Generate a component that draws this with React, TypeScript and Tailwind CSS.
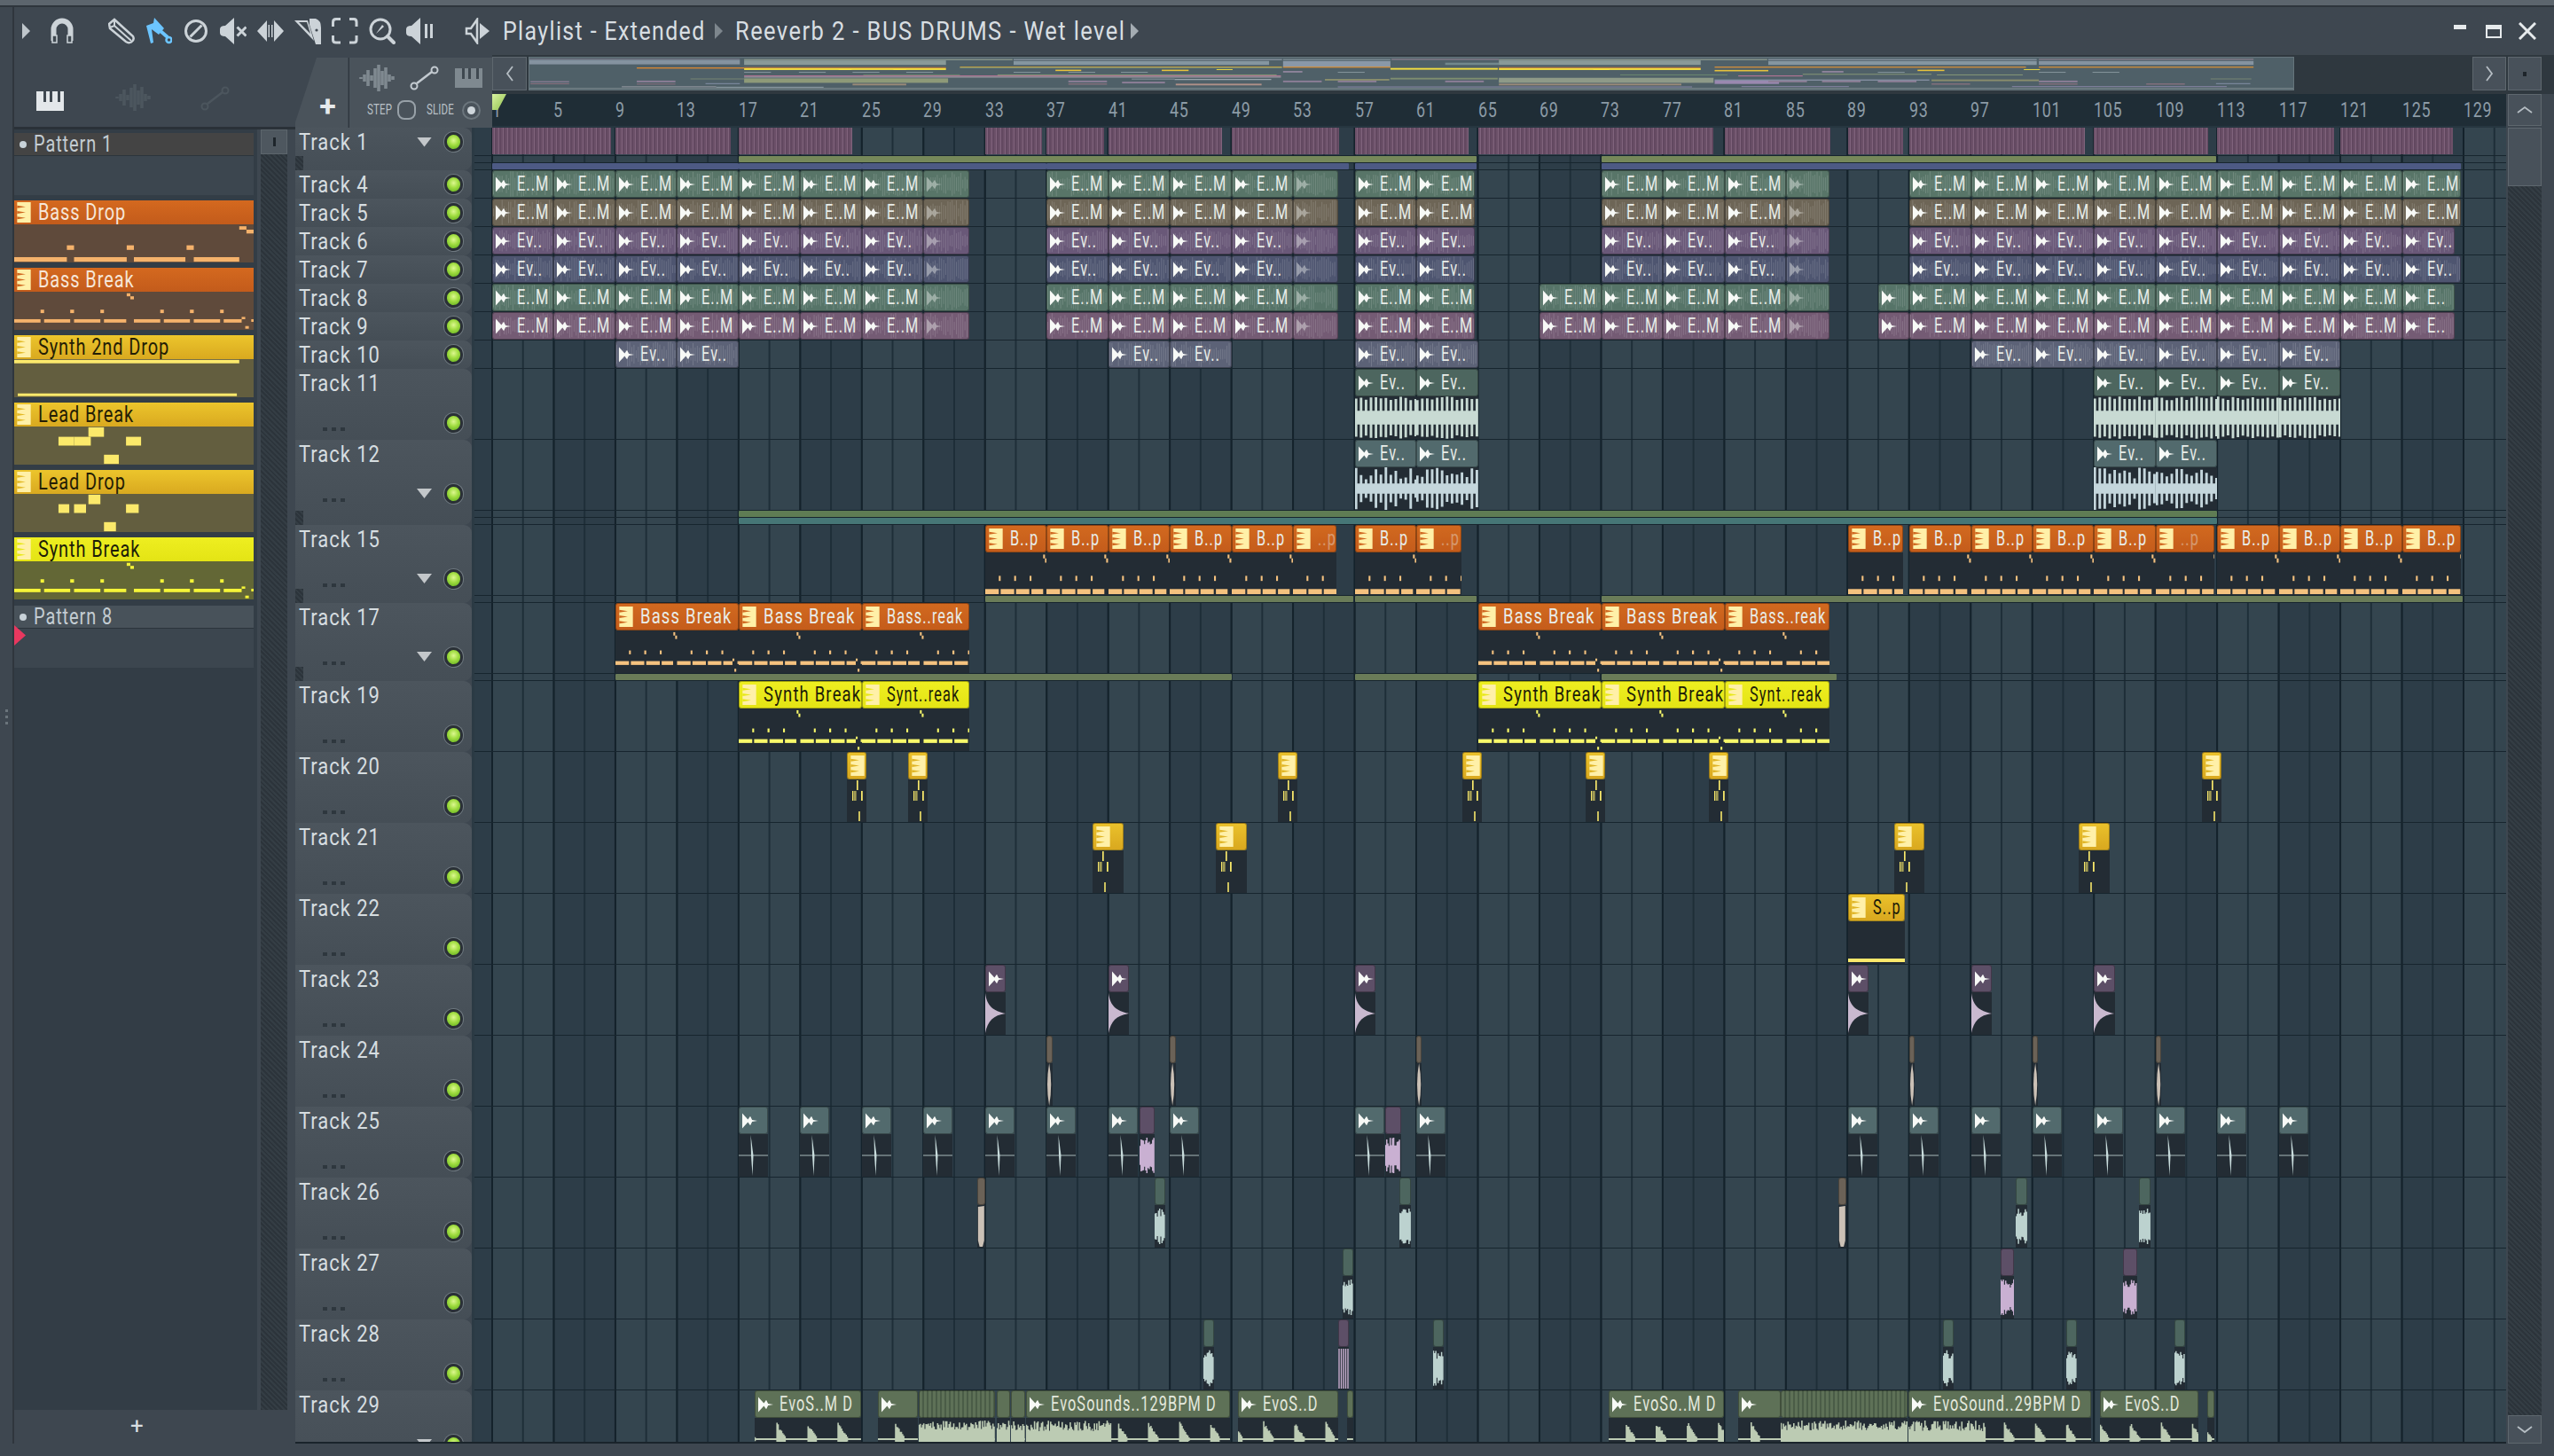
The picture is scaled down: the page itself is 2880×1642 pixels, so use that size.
import React from "react";

const BAR = 17.37;
const barLeft = (bar: number) => (bar - 1) * BAR + 20;
const fromX = (x: number) => (x - 555) / BAR + 1;

// grid behind every lane, bar 1 sits 20px into the lane
const GRID =
  "bg-[linear-gradient(90deg,#14222b_2px,transparent_2px),linear-gradient(90deg,#1e2e38_2px,transparent_2px),linear-gradient(90deg,#34454f_50%,#2d3d48_50%)] bg-[size:69.48px_100%,34.74px_100%,138.96px_100%] bg-[position:19px_0,19px_0,20px_0]";
const HATCH = "bg-[repeating-linear-gradient(45deg,#2c343b_0_2px,#343d44_2px_4px)]";
const STRIPES = "bg-[repeating-linear-gradient(90deg,#6b5068_0_2px,#80637c_2px_3px,#624860_3px_5px)]";
const EVO_STRIPES = "bg-[repeating-linear-gradient(90deg,#5e7157_0_3px,#4a5c47_3px_5px)] border border-[#6b7f63]";

type Note = [number, number, number, number];

const BASS_DROP: Note[] = [
  [0, 22, 86, 98], [25, 47, 86, 98], [50, 71.5, 86, 98], [75, 94, 86, 98],
  [22, 25, 55, 67], [47, 50, 55, 67], [72, 75, 55, 67],
  [94, 97, 5, 14], [97, 100, 14, 24],
];
const BASS_BREAK: Note[] = [
  [0, 11, 72, 81], [12.5, 23.4, 72, 81], [25, 36, 72, 81], [37.5, 46.8, 72, 81],
  [50, 61, 72, 81], [62.5, 73.4, 72, 81], [75, 86, 72, 81], [87.5, 95, 72, 81],
  [11, 12.5, 47, 56], [23.4, 25, 47, 56], [36, 37.5, 47, 56],
  [61, 62.5, 47, 56], [73.4, 75, 47, 56], [86, 87.5, 47, 56],
  [47, 48.5, 4, 12], [48.5, 50, 12, 20], [95, 96.5, 66, 72], [96.5, 98, 90, 97], [99, 100, 72, 79],
];
const SYNTH_2ND: Note[] = [[0, 94, 2, 11], [1.5, 93, 90, 97]];
const LEAD_BREAK: Note[] = [
  [18.5, 25, 27, 50], [25, 32, 27, 50], [31, 37.5, 2, 27], [46.7, 53, 27, 50], [37.5, 43.7, 74, 98],
];
const LEAD_DROP: Note[] = [
  [18.5, 23, 27, 50], [25, 30, 27, 50], [31, 36, 2, 27], [46.7, 52, 27, 50], [37.5, 42.5, 74, 98],
];
// tiny pattern clips, x in pixels
const LEAD_TICKS: Note[] = [
  [11, 12.7, 2, 25], [6, 7, 27, 50], [7.6, 8.6, 27, 50], [9.4, 10.4, 27, 50], [16, 17.8, 27, 50], [13.2, 14.8, 75, 98],
];

// the app's font is a tall condensed face, Roboto squeezed sideways is the nearest
function Narrow({ children, cls = "scale-x-[0.8]" }: { children: React.ReactNode; cls?: string }) {
  return <span className={`inline-block origin-left whitespace-nowrap ${cls}`}>{children}</span>;
}

function Notes({ notes, span, w, fill }: { notes: Note[]; span: number; w: number; fill: string }) {
  return (
    <svg className="absolute inset-0 h-full w-full" viewBox={`0 0 ${w} 100`} preserveAspectRatio="none">
      {notes.map((n, i) => {
        const x0 = (n[0] / 100) * span;
        const x1 = (n[1] / 100) * span;
        return <rect key={i} x={x0} y={n[2]} width={x1 - x0} height={n[3] - n[2]} fill={fill} />;
      })}
    </svg>
  );
}

function wavePath(kind: string, w: number, h: number, seed: number) {
  let s = seed * 7919 + 13;
  const r = () => {
    s = (s * 16807) % 2147483647;
    return (s % 1000) / 1000;
  };
  const mid = h / 2;
  let d = "";
  const step = kind === "bg" ? 2.5 : kind === "dense" || kind === "dense2" ? 1.4 : 1.3;
  let spike = 1;
  for (let x = 0.5, i = 0; x < w; x += step, i++) {
    let a = 1;
    const p = ((x + seed * 5) % 34.74) / 34.74;
    const burst = p < 0.32 ? 21 * (1 - p / 0.36) * (0.7 + 0.3 * r()) : 1;
    if (i % 4 === 0) spike = r();
    if (kind === "bg") a = mid * (0.3 + 0.7 * r());
    if (kind === "dense") a = i % 4 < 2 ? mid * (0.82 + 0.18 * spike) : h * 0.16;
    if (kind === "dense2") a = i % 4 < 2 ? mid * (0.4 + 0.6 * spike) : h * 0.12;
    if (kind === "block") a = mid * (0.45 + 0.4 * r());
    if (kind === "evo") a = burst;
    if (kind === "evofull") a = 10 + 11 * r();
    if (kind === "evomix") a = x < w * 0.42 ? 9 + 12 * r() : burst;
    d += `M${x} ${mid - a}V${mid + a}`;
  }
  return d;
}

function Wave({ kind, w, h, seed, color, opacity = 1 }: { kind: string; w: number; h: number; seed: number; color: string; opacity?: number }) {
  const evo = kind.startsWith("evo");
  return (
    <svg className="absolute inset-0 h-full w-full" viewBox={`0 0 ${w} ${h}`} preserveAspectRatio="none">
      <path d={wavePath(kind, w, h, seed)} stroke={color} strokeOpacity={opacity} strokeWidth={kind === "bg" ? 1 : evo ? 1.6 : 1.5} fill="none" />
      {evo ? <path d={`M0 ${h / 2}H${w}`} stroke={color} strokeWidth={1.5} /> : null}
    </svg>
  );
}

function BodyShape({ kind, w, color }: { kind: string; w: number; color: string }) {
  if (kind === "kick")
    return (
      <svg className="absolute inset-0 h-full w-full" viewBox="0 0 23 48" preserveAspectRatio="none">
        <path d="M0 1C2 16 9 21 23 24C9 26 3 32 0 46Z" fill={color} />
      </svg>
    );
  if (kind === "needle")
    return (
      <svg className="absolute inset-0 h-full w-full" viewBox="0 0 33 48" preserveAspectRatio="none">
        <path d="M0 24H33" stroke={color} strokeWidth="1" strokeOpacity="0.8" />
        <path d="M13.500 1L16.500 24L15.500 47L14 24Z" fill={color} />
      </svg>
    );
  if (kind === "tan")
    return (
      <svg className="absolute inset-0 h-full w-full" viewBox="0 0 6 48" preserveAspectRatio="none">
        <path d="M3 0Q7 24 3 48Q-1 24 3 0Z" fill={color} />
      </svg>
    );
  if (kind === "bar")
    return (
      <svg className="absolute inset-0 h-full w-full" viewBox="0 0 10 48" preserveAspectRatio="none">
        <path d="M1 2L9 1V40L7 47H3L1 40Z" fill={color} />
      </svg>
    );
  if (kind === "yellowline") return <div className="absolute bottom-[2px] left-0 right-0 h-[4px] bg-[#fbe96b]" />;
  if (kind === "stripes")
    return (
      <svg className="absolute inset-0 h-full w-full" viewBox={`0 0 ${w} 48`} preserveAspectRatio="none">
        <path d="M1 2V47M3.500 2V47M6 2V47M8.500 2V47M11 2V47" stroke={color} strokeWidth="1.4" />
      </svg>
    );
  return null;
}

function AudioIcon({ dim }: { dim?: boolean }) {
  return (
    <svg width="17" height="18" viewBox="0 0 16 16" className={dim ? "shrink-0 opacity-40" : "shrink-0"}>
      <path d="M0 0L6 6.500L8.500 3L10.500 7L16 8L10.500 9L8.500 13L6 9.500L0 16Z" fill="#f7f9f6" />
    </svg>
  );
}

function PatternIcon({ notch }: { notch: string }) {
  return (
    <svg width="16" height="23" viewBox="0 0 16 24" className="shrink-0">
      <rect width="16" height="24" fill="#fff0a8" />
      <path d="M0 4L10 5.500L0 7ZM0 10.500L10 12L0 13.500ZM0 17L10 18.500L0 20Z" fill={notch} />
    </svg>
  );
}

type Clip = {
  a: number;
  b: number;
  title?: string;
  head: string;
  body?: string;
  text?: string;
  pattern?: string;
  notes?: Note[];
  span?: number;
  fill?: string;
  wave?: string;
  waveColor?: string;
  dim?: boolean;
  noIcon?: boolean;
};

function ClipView({ c, tall, seed }: { c: Clip; tall: boolean; seed: number }) {
  const w = (c.b - c.a) * BAR;
  const isShape = c.wave && ["kick", "needle", "tan", "bar", "yellowline", "stripes"].includes(c.wave);
  return (
    <div className="absolute top-0 bottom-[1px]" style={{ left: barLeft(c.a), width: w }}>
      <div className={`relative flex h-[31px] items-center overflow-hidden rounded-[3px] border-b border-black/30 pl-[3px] ${c.head}`}>
        {!tall && c.wave ? <Wave kind="bg" w={w} h={31} seed={seed} color="#ffffff" opacity={0.16} /> : null}
        {c.noIcon ? null : c.pattern ? <div className="relative mr-[8px]"><PatternIcon notch={c.pattern} /></div> : <div className="relative mr-[7px]"><AudioIcon dim={c.dim && !c.title} /></div>}
        {c.title ? (
          <span className={`relative shrink-0 text-[23px] leading-none tracking-[1.5px] ${c.text ?? "text-[#e8ece8]"} ${c.dim ? "opacity-40" : ""}`}>
            <Narrow cls={c.title.includes("..") ? "scale-x-[0.71]" : "scale-x-[0.8]"}>{c.title}</Narrow>
          </span>
        ) : null}
      </div>
      {tall ? (
        <div className="relative h-[48px] overflow-hidden bg-[#232c34]">
          {c.notes ? <Notes notes={c.notes} span={c.span ?? w} w={w} fill={c.fill ?? "#f5b26b"} /> : null}
          {c.wave && isShape ? <BodyShape kind={c.wave} w={w} color={c.waveColor ?? "#c5dbdb"} /> : null}
          {c.wave && !isShape ? <Wave kind={c.wave} w={w} h={48} seed={seed} color={c.waveColor ?? "#b9ccc4"} /> : null}
        </div>
      ) : null}
    </div>
  );
}

const strip = (starts: number[], len: number, base: Omit<Clip, "a" | "b">): Clip[] =>
  starts.map((a) => ({ ...base, a, b: a + len }));

function audioRow(title: string, head: string, opts: { extra?: number[]; last?: string; end?: number } = {}): Clip[] {
  const base = { title, head, wave: "bg" };
  return [
    ...strip([1, 5, 9, 13, 17, 21, 25], 4, base),
    { ...base, a: 29, b: 32, title: "", dim: true },
    ...strip([37, 41, 45, 49], 4, base),
    { ...base, a: 53, b: 55.9, title: "", dim: true },
    ...strip([57, 61], 4, base).map((c, i) => (i === 1 ? { ...c, b: 64.8 } : c)),
    ...strip(opts.extra ?? [], 4, base),
    ...strip([73, 77, 81], 4, base),
    { ...base, a: 85, b: 87.8, title: "", dim: true },
    ...strip([93, 97, 101, 105, 109, 113, 117, 121], 4, base),
    { ...base, a: 125, b: opts.end ?? 128.8, title: opts.last ?? title },
  ];
}

const ORANGE = "bg-gradient-to-b from-[#d2691f] to-[#c45c1b] border border-[#e07a30]";
const YELLOW = "bg-gradient-to-b from-[#eeee20] to-[#e4e414] border border-[#f2f23c]";
const GOLD = "bg-gradient-to-b from-[#eac12b] to-[#d9a81f] border border-[#c79a1c]";
const PURPLE = "bg-[#5d4f67] border border-[#6c5d76]";
const TEAL = "bg-[#526a6d] border border-[#607a7c]";
const SAGE = "bg-[#5e7157] border border-[#6b7f63]";
const DKGREEN = "bg-[#4d665f] border border-[#5a756c]";
const TAN = "bg-[#6b6257] border border-[#776e62]";

const bd = (a: number, b: number, dim?: boolean): Clip => ({
  a, b, title: dim ? "..p" : "B..p", head: ORANGE, pattern: "#cf661e", notes: BASS_DROP, span: 69.48, fill: "#f5c27f", dim,
});
const bb = (a: number, b: number, title: string): Clip => ({
  a, b, title, head: ORANGE, pattern: "#cf661e", notes: BASS_BREAK, span: 138.96, fill: "#f5c27f",
});
const sb = (a: number, b: number, title: string): Clip => ({
  a, b, title, head: YELLOW, pattern: "#e8e818", text: "text-[#1c1c08]", notes: BASS_BREAK, span: 138.96, fill: "#f8f86a",
});
const goldClip = (a: number, len: number): Clip => ({
  a, b: a + len, head: GOLD, pattern: "#e0b424", notes: LEAD_TICKS, span: 100, fill: "#f6e66a",
});

type Sub = { h: number; segs: [number, number, string][] };
type Track = { name: string; h: number; arrow?: boolean; sub?: Sub[]; clips: Clip[]; blocks?: [number, number][] };

const LGREEN = "bg-[#76885a]";
const LBLUE = "bg-[#4d5a84]";
const LGREEN2 = "bg-[#5f7c54]";
const LTEAL = "bg-[#467676]";
const LOLIVE = "bg-[#6a7c58]";

const ev = (a: number, b: number, title: string, wave: string, color: string, head: string): Clip => ({ a, b, title, head, wave, waveColor: color });

const thin = (a: number, b: number, head: string, wave: string, waveColor: string): Clip => ({ a, b, head, noIcon: true, wave, waveColor });

const tracks: Track[] = [
  {
    name: "Track 1",
    h: 32,
    arrow: true,
    clips: [],
    blocks: [
      [1, 8.7], [9, 16.5], [17, 24.4], [33, 36.7], [37, 40.7], [41, 48.4], [49, 56], [57, 64.4], [65, 80.3],
      [81, 87.9], [89, 92.6], [93, 104.4], [105, 112.4], [113, 120.6], [121, 128.3],
    ],
    sub: [
      { h: 8, segs: [[17, 64.9, LGREEN], [73, 112.9, LGREEN]] },
      { h: 8, segs: [[1, 17, LBLUE], [17, 25, LBLUE], [25, 37, LBLUE], [37, 56.6, LBLUE], [57, 64.9, LBLUE], [73, 128.8, LBLUE]] },
    ],
  },
  { name: "Track 4", h: 32, clips: audioRow("E..M", "bg-[#587568] border border-[#66837a]") },
  { name: "Track 5", h: 32, clips: audioRow("E..M", "bg-[#6d6556] border border-[#7b7364]") },
  { name: "Track 6", h: 32, clips: audioRow("Ev..", "bg-[#695878] border border-[#776686]", { end: 128.4 }) },
  { name: "Track 7", h: 32, clips: audioRow("Ev..", "bg-[#4e5570] border border-[#5c637e]") },
  {
    name: "Track 8",
    h: 32,
    clips: [
      ...audioRow("E..M", "bg-[#567468] border border-[#648276]", { extra: [69], last: "E..", end: 128.4 }),
      { a: 91, b: 93, head: "bg-[#567468] border border-[#648276]", wave: "bg" },
    ],
  },
  {
    name: "Track 9",
    h: 32,
    clips: [
      ...audioRow("E..M", "bg-[#745b74] border border-[#826982]", { extra: [69], last: "E..", end: 128.4 }),
      { a: 91, b: 93, head: "bg-[#745b74] border border-[#826982]", wave: "bg" },
    ],
  },
  {
    name: "Track 10",
    h: 32,
    clips: strip([9, 13, 41, 45, 57, 61, 97, 101, 105, 109, 113, 117], 4, { title: "Ev..", head: "bg-[#5c6277] border border-[#6a7085]", wave: "bg" }),
  },
  {
    name: "Track 11",
    h: 80,
    clips: [57, 61, 105, 109, 113, 117].map((a) => ev(a, a + 4, "Ev..", "dense", "#c8dad3", DKGREEN)),
  },
  {
    name: "Track 12",
    h: 80,
    arrow: true,
    clips: [57, 61, 105, 109].map((a) => ev(a, a + 4, "Ev..", "dense2", "#c4d6dc", TEAL)),
    sub: [
      { h: 8, segs: [[17, 113, LGREEN2]] },
      { h: 8, segs: [[17, 113, LTEAL]] },
    ],
  },
  {
    name: "Track 15",
    h: 80,
    arrow: true,
    clips: [
      bd(33, 37), bd(37, 41), bd(41, 45), bd(45, 49), bd(49, 53), bd(53, 55.8, true), bd(57, 61), bd(61, 63.9, true),
      bd(89, 92.6), bd(93, 97), bd(97, 101), bd(101, 105), bd(105, 109), bd(109, 112.8, true), bd(113, 117), bd(117, 121), bd(121, 125), bd(125, 128.8),
    ],
    sub: [{ h: 8, segs: [[33, 56.9, LOLIVE], [57, 64.9, LOLIVE], [73, 128.9, LOLIVE]] }],
  },
  {
    name: "Track 17",
    h: 80,
    arrow: true,
    clips: [
      bb(9, 17, "Bass Break"), bb(17, 25, "Bass Break"), bb(25, 32, "Bass..reak"),
      bb(65, 73, "Bass Break"), bb(73, 81, "Bass Break"), bb(81, 87.8, "Bass..reak"),
    ],
    sub: [{ h: 8, segs: [[9, 49, LOLIVE], [57, 64.9, LOLIVE], [73, 88.3, LOLIVE]] }],
  },
  {
    name: "Track 19",
    h: 80,
    clips: [
      sb(17, 25, "Synth Break"), sb(25, 32, "Synt..reak"),
      sb(65, 73, "Synth Break"), sb(73, 81, "Synth Break"), sb(81, 87.8, "Synt..reak"),
    ],
  },
  { name: "Track 20", h: 80, clips: [24, 28, 52, 64, 72, 80, 112].map((a) => goldClip(a, 1.27)) },
  { name: "Track 21", h: 80, clips: [40, 48, 92, 104].map((a) => goldClip(a, 2)) },
  {
    name: "Track 22",
    h: 80,
    clips: [{ a: 89, b: 92.7, title: "S..p", head: GOLD, pattern: "#e0b424", text: "text-[#1c1a08]", wave: "yellowline" }],
  },
  {
    name: "Track 23",
    h: 80,
    clips: [33, 41, 57, 89, 97, 105].map((a) => ({ a, b: a + 1.33, head: PURPLE, wave: "kick", waveColor: "#c9b9cf" })),
  },
  {
    name: "Track 24",
    h: 80,
    clips: [37, 45, 61, 93, 101, 109].map((a) => thin(a, a + 0.36, TAN, "tan", "#cbc1b6")),
  },
  {
    name: "Track 25",
    h: 80,
    clips: [
      ...[17, 21, 25, 29, 33, 37, 41, 45, 57, 61, 89, 93, 97, 101, 105, 109, 113, 117].map((a) => ({
        a, b: a + 1.9, head: TEAL, wave: "needle", waveColor: "#c8dcdc",
      })),
      thin(43, 44, PURPLE, "block", "#c9b0d2"),
      thin(59, 60, PURPLE, "block", "#c9b0d2"),
    ],
  },
  {
    name: "Track 26",
    h: 80,
    clips: [
      thin(32.5, 33, TAN, "bar", "#cbc1b6"),
      thin(44, 44.7, DKGREEN, "block", "#bcd2cf"),
      thin(59.9, 60.65, DKGREEN, "block", "#bcd2cf"),
      thin(88.4, 88.9, TAN, "bar", "#cbc1b6"),
      thin(99.9, 100.65, DKGREEN, "block", "#bcd2cf"),
      thin(107.9, 108.65, DKGREEN, "block", "#bcd2cf"),
    ],
  },
  {
    name: "Track 27",
    h: 80,
    clips: [
      thin(56.2, 56.9, DKGREEN, "block", "#bcd2cf"),
      thin(98.9, 99.8, PURPLE, "block", "#c9b0d2"),
      thin(106.9, 107.8, PURPLE, "block", "#c9b0d2"),
    ],
  },
  {
    name: "Track 28",
    h: 80,
    clips: [
      thin(47.2, 47.85, DKGREEN, "block", "#bcd2cf"),
      thin(55.9, 56.6, PURPLE, "stripes", "#c9b0d2"),
      thin(62.1, 62.8, DKGREEN, "block", "#bcd2cf"),
      thin(95.2, 95.9, DKGREEN, "block", "#bcd2cf"),
      thin(103.2, 103.9, DKGREEN, "block", "#bcd2cf"),
      thin(110.2, 110.9, DKGREEN, "block", "#bcd2cf"),
    ],
  },
  {
    name: "Track 29",
    h: 80,
    arrow: true,
    clips: (
      [
        [850.6, 970.6, "EvoS..M D", "evo", SAGE], [989.6, 1035, "", "evo", SAGE], [1036, 1122, "", "evofull", EVO_STRIPES], [1124, 1139, "", "evofull", SAGE], [1140, 1156, "", "evofull", SAGE],
        [1157, 1387, "EvoSounds..129BPM D", "evomix", SAGE], [1396, 1508.7, "EvoS..D", "evo", SAGE], [1519, 1526, "", "evo", SAGE],
        [1814, 1943.6, "EvoSo..M D", "evo", SAGE], [1960, 2007.5, "", "evo", SAGE], [2008, 2150.6, "", "evofull", EVO_STRIPES],
        [2152, 2358, "EvoSound..29BPM D", "evomix", SAGE], [2368, 2479, "EvoS..D", "evo", SAGE], [2489, 2497, "", "evo", SAGE],
      ] as [number, number, string, string, string][]
    ).map(([x0, x1, title, wave, head]) => ({
      a: fromX(x0), b: fromX(x1), title, head, wave, waveColor: "#bccbb3", noIcon: x1 - x0 < 45 || (wave === "evofull" && !title), text: "text-[#e3e8dc]",
    })),
  },
];

function Led() {
  return (
    <div className="h-[22px] w-[21px] shrink-0 rounded-full border-[3px] border-[#2a3036] bg-[radial-gradient(circle_at_50%_40%,#dcf78f_0%,#9fdc3f_45%,#5aa81c_100%)] shadow-[0_0_0_1px_#6f7980]" />
  );
}

function Arrow() {
  return <div className="h-[11px] w-[17px] shrink-0 bg-[#c3c7ca] [clip-path:polygon(0_0,100%_0,50%_100%)]" />;
}

function TrackHeader({ t }: { t: Track }) {
  const total = t.h + (t.sub ? t.sub.reduce((n, s) => n + s.h, 0) : 0);
  const dots = (
    <div className="mb-[2px] ml-[27px] flex gap-[5px]">
      <div className="h-[4px] w-[5px] bg-[#2e373e]" />
      <div className="h-[4px] w-[5px] bg-[#2e373e]" />
      <div className="h-[4px] w-[5px] bg-[#2e373e]" />
    </div>
  );
  return (
    <div className="relative w-[199px] shrink-0 overflow-hidden rounded-r-[9px] bg-gradient-to-b from-[#4c555d] to-[#454e56] text-[25px] tracking-[1.1px] text-[#d6dde0]" style={{ height: total }}>
      {t.h === 32 ? (
        <div className="flex h-[32px] items-center pl-[4px] pr-[10px]">
          <span className="leading-none"><Narrow cls="scale-x-[0.88]">{t.name}</Narrow></span>
          {t.arrow ? <div className="ml-auto mr-[14px]"><Arrow /></div> : null}
          <div className={t.arrow ? "" : "ml-auto"}><Led /></div>
        </div>
      ) : (
        <div className="flex h-[80px] flex-col pb-[8px] pl-[4px] pr-[10px]">
          <div className="flex h-[32px] shrink-0 items-center leading-none"><Narrow cls="scale-x-[0.88]">{t.name}</Narrow></div>
          <div className="mt-auto flex items-end">
            {dots}
            {t.arrow ? <div className="mb-[6px] ml-auto mr-[14px]"><Arrow /></div> : null}
            <div className={t.arrow ? "" : "ml-auto"}><Led /></div>
          </div>
        </div>
      )}
      {t.sub ? <div className={`absolute bottom-0 left-0 h-[16px] w-[9px] ${HATCH}`} /> : null}
    </div>
  );
}

function Lane({ t, index }: { t: Track; index: number }) {
  const tall = t.h === 80;
  return (
    <div className="flex min-w-0 flex-1 flex-col">
      <div className={`relative border-b border-[#17252e] ${GRID}`} style={{ height: t.h }}>
        {t.blocks
          ? t.blocks.map(([a, b], i) => (
              <div key={i} className={`absolute top-0 bottom-[1px] ${STRIPES}`} style={{ left: barLeft(a), width: (b - a) * BAR }} />
            ))
          : null}
        {t.clips.map((c, i) => (
          <ClipView key={i} c={c} tall={tall} seed={index * 31 + i + 1} />
        ))}
      </div>
      {t.sub
        ? t.sub.map((s, i) => (
            <div key={i} className={`relative border-b border-[#17252e] ${GRID}`} style={{ height: s.h }}>
              {s.segs.map(([a, b, cls], k) => (
                <div key={k} className={`absolute top-0 bottom-0 rounded-[1px] ${cls}`} style={{ left: barLeft(a), width: (b - a) * BAR }} />
              ))}
            </div>
          ))
        : null}
    </div>
  );
}

const ICON = "#ccd3d8";

function ToolIcon({ children, w = 30 }: { children: React.ReactNode; w?: number }) {
  return (
    <svg width={w} height="30" viewBox={`0 0 ${w} 30`} className="shrink-0">
      {children}
    </svg>
  );
}

function Toolbar() {
  return (
    <div className="flex h-[54px] shrink-0 items-center pl-[9px] text-[29px] tracking-[1.6px] text-[#d8dee2]">
      <svg width="9" height="18" viewBox="0 0 9 18" className="shrink-0"><path d="M0 0L9 9L0 18Z" fill="#bfc6cb" /></svg>
      <div className="ml-[23px]">
        <ToolIcon w={26}>
          <path d="M3.500 26V13a9.500 9.500 0 0 1 19 0V26" stroke={ICON} strokeWidth="6" fill="none" />
          <path d="M2 20H7V28H2ZM19 20H24V28H19Z" fill="#3f4850" stroke={ICON} strokeWidth="1.500" />
        </ToolIcon>
      </div>
      <div className="ml-[39px] flex items-center gap-[12px]">
        <ToolIcon>
          <path d="M1 7L7 2L28 21Q30 25 26 27.500Q23 29 20 27L2 12Z" fill="none" stroke={ICON} strokeWidth="2.500" />
          <path d="M7 3L7 9L2 11M7 9L26 26" fill="none" stroke={ICON} strokeWidth="2" />
        </ToolIcon>
        <ToolIcon>
          <path d="M1 9L9 6L10 0L21 12L15 19L7 13L9 28L6 29Z" fill="#6cc5ff" />
          <path d="M17 15L25 22" stroke="#6cc5ff" strokeWidth="4" />
          <circle cx="26.500" cy="25" r="3" fill="none" stroke="#6cc5ff" strokeWidth="2.500" />
        </ToolIcon>
        <ToolIcon>
          <circle cx="15" cy="15" r="11.500" fill="none" stroke={ICON} strokeWidth="3" />
          <path d="M8.500 21.500L21.500 8.500" stroke={ICON} strokeWidth="3" />
        </ToolIcon>
        <ToolIcon>
          <path d="M0 13Q0 9 6 9L16 0V30L6 21Q0 21 0 17Z" fill={ICON} />
          <path d="M19.500 10.500L29.500 20.500M29.500 10.500L19.500 20.500" stroke={ICON} strokeWidth="3" />
        </ToolIcon>
        <ToolIcon>
          <path d="M0 15L11 3V27ZM19 3L30 15L19 27Z" fill={ICON} />
          <path d="M12.500 8H14V22H12.500ZM16 8H17.500V22H16Z" fill={ICON} />
        </ToolIcon>
        <ToolIcon>
          <path d="M0 3H15L22 26ZM17 1H24Q30 3 30 11V30H24L17 8Z" fill={ICON} />
          <circle cx="25" cy="14" r="1.600" fill="#3f4850" />
          <path d="M5 5H14L18 18Z" fill="#3f4850" />
        </ToolIcon>
        <ToolIcon>
          <path d="M1.500 10V5Q1.500 1.500 5 1.500H10M20 1.500H25Q28 1.500 28 5V10M28 20V25Q28 28 25 28H20M10 28H5Q1.500 28 1.500 25V20" fill="none" stroke={ICON} strokeWidth="3" />
        </ToolIcon>
        <ToolIcon>
          <circle cx="13" cy="13" r="11" fill="none" stroke={ICON} strokeWidth="3" />
          <path d="M8 18L15 8L17 10Z" fill={ICON} />
          <path d="M21 21L28 28" stroke={ICON} strokeWidth="4" strokeLinecap="round" />
        </ToolIcon>
        <ToolIcon>
          <path d="M0 13Q0 9 6 9L16 0V30L6 21Q0 21 0 17Z" fill={ICON} />
          <path d="M21 7H24V23H21ZM27 7H30V23H27Z" fill={ICON} />
        </ToolIcon>
      </div>
      <div className="ml-[36px]">
        <ToolIcon>
          <path d="M2 12H7L14 2V28L7 18H2Z" fill="none" stroke={ICON} strokeWidth="2.500" />
          <path d="M17 6L28 15L17 24Z" fill={ICON} />
        </ToolIcon>
      </div>
      <span className="ml-[13px] w-[228px] shrink-0 leading-none"><Narrow cls="scale-x-[0.86]">Playlist - Extended</Narrow></span>
      <svg width="9" height="18" viewBox="0 0 9 18" className="ml-[11px] shrink-0"><path d="M0 0L9 9L0 18Z" fill="#7d868d" /></svg>
      <span className="ml-[14px] w-[443px] shrink-0 leading-none"><Narrow cls="scale-x-[0.88]">Reeverb 2 - BUS DRUMS - Wet level</Narrow></span>
      <svg width="9" height="18" viewBox="0 0 9 18" className="ml-[3px] shrink-0"><path d="M0 0L9 9L0 18Z" fill="#a4acb2" /></svg>
      <div className="ml-auto flex items-center pr-[20px]">
        <div className="mb-[10px] h-[5px] w-[14px] bg-[#e6eaec]" />
        <div className="ml-[22px] h-[15px] w-[18px] border-2 border-t-[5px] border-[#e6eaec]" />
        <svg width="20" height="20" viewBox="0 0 20 20" className="ml-[19px]"><path d="M1 1L19 19M19 1L1 19" stroke="#e6eaec" strokeWidth="3" /></svg>
      </div>
    </div>
  );
}

const PIANO = (
  <>
    <path d="M0 0H31V22H0Z" fill="currentColor" />
    <path d="M8 0H11V12H8ZM15 0H18V12H15ZM24 0H27V12H24Z" fill="#3f4850" />
  </>
);

function WaveGlyph({ cls }: { cls: string }) {
  return (
    <svg width="40" height="30" viewBox="0 0 40 30" className={cls}>
      <path d="M2 14V16M6 11V19M10 6V24M14 12V18M18 4V26M22 0V30M26 7V23M30 3V27M34 11V19M38 13V17" stroke="currentColor" strokeWidth="3.600" />
    </svg>
  );
}

function AutoGlyph({ cls }: { cls: string }) {
  return (
    <svg width="33" height="28" viewBox="0 0 33 28" className={cls}>
      <circle cx="5" cy="23" r="3.500" fill="none" stroke="currentColor" strokeWidth="2" />
      <circle cx="28" cy="5" r="3.500" fill="none" stroke="currentColor" strokeWidth="2" />
      <path d="M8 20L25 7" stroke="currentColor" strokeWidth="2.500" />
    </svg>
  );
}

function PatternItem({ name, head, text, body, notes, fill, notch }: { name: string; head: string; text: string; body: string; notes: Note[]; fill: string; notch: string }) {
  return (
    <div className="mt-[6px] w-[270px]">
      <div className={`flex h-[27px] items-center pl-[3px] ${head}`}>
        <PatternIcon notch={notch} />
        <span className={`ml-[8px] text-[25px] leading-none tracking-[1.1px] ${text}`}><Narrow>{name}</Narrow></span>
      </div>
      <div className={`relative h-[43px] overflow-hidden ${body}`}>
        <Notes notes={notes} span={100} w={100} fill={fill} />
      </div>
    </div>
  );
}

function EmptyPattern({ name, dark }: { name: string; dark?: boolean }) {
  return (
    <div className="w-[270px]">
      <div className={`flex h-[26px] items-center border-b border-[#2c353c] pl-[6px] ${dark ? "bg-[#444444]" : "bg-[#48525a]"}`}>
        <div className="h-[8px] w-[8px] rounded-full bg-[#c8d2d8]" />
        <span className="ml-[8px] text-[25px] leading-none tracking-[1.1px] text-[#c3ccd2]"><Narrow>{name}</Narrow></span>
      </div>
      <div className="h-[44px] bg-[#3c464f]" />
    </div>
  );
}

function Picker() {
  return (
    <div className="flex w-[317px] shrink-0 flex-col">
      <div className="flex h-[81px] shrink-0 items-end pb-[18px] pl-[25px]">
        <svg width="31" height="22" viewBox="0 0 31 22" className="text-[#e3e7ea]">{PIANO}</svg>
        <WaveGlyph cls="ml-[58px] text-[#4c565e]" />
        <AutoGlyph cls="ml-[56px] text-[#4c565e]" />
      </div>
      <div className="flex min-h-0 flex-1 border-t-[3px] border-[#2a3138]">
        <div className="flex h-[1444px] w-[274px] shrink-0 flex-col bg-[#333d46] pt-[4px]">
          <EmptyPattern name="Pattern 1" dark />
          <PatternItem name="Bass Drop" head="bg-gradient-to-b from-[#d4691f] to-[#c35b1b]" text="text-[#f6e6d8]" body="bg-[#5f4a3b]" notes={BASS_DROP} fill="#f5b26b" notch="#cf661e" />
          <PatternItem name="Bass Break" head="bg-gradient-to-b from-[#d4691f] to-[#c35b1b]" text="text-[#f6e6d8]" body="bg-[#5f4a3b]" notes={BASS_BREAK} fill="#f5b26b" notch="#cf661e" />
          <PatternItem name="Synth 2nd Drop" head="bg-gradient-to-b from-[#ecc52c] to-[#d9a91f]" text="text-[#241d05]" body="bg-[#635e3f]" notes={SYNTH_2ND} fill="#fbe96b" notch="#e3b926" />
          <PatternItem name="Lead Break" head="bg-gradient-to-b from-[#ecc52c] to-[#d9a91f]" text="text-[#241d05]" body="bg-[#635e3f]" notes={LEAD_BREAK} fill="#fbe96b" notch="#e3b926" />
          <PatternItem name="Lead Drop" head="bg-gradient-to-b from-[#ecc52c] to-[#d9a91f]" text="text-[#241d05]" body="bg-[#635e3f]" notes={LEAD_DROP} fill="#fbe96b" notch="#e3b926" />
          <PatternItem name="Synth Break" head="bg-gradient-to-b from-[#eeee20] to-[#e4e414]" text="text-[#1c1c08]" body="bg-[#636736]" notes={BASS_BREAK} fill="#f4f438" notch="#e8e818" />
          <div className="mt-[7px]"><EmptyPattern name="Pattern 8" /></div>
          <div className="h-0 w-0">
            <div className="-mt-[48px] h-[23px] w-[13px] bg-[#e8385f] [clip-path:polygon(0_0,100%_50%,0_100%)]" />
          </div>
        </div>
        <div className={`ml-[4px] h-[1444px] w-[30px] shrink-0 ${HATCH}`}>
          <div className="flex h-[28px] items-center justify-center border border-[#5c656c] bg-[#4e575f]">
            <div className="h-[10px] w-[3px] bg-[#1e252b]" />
          </div>
        </div>
      </div>
      <div className="flex h-[40px] shrink-0 items-center justify-center pr-[40px] text-[26px] leading-none text-[#d8dee2]">+</div>
    </div>
  );
}

const OVERVIEW: [number, number, number, number, string][] = [
  [-86, 16, 196, 3, "#7f7a8c"], [114, 17, 250, 4, "#8d9a8f"], [365, 17, 250, 4, "#8a94a0"], [616, 17, 100, 4, "#7f8e96"], [717, 16, 100, 4, "#8b7f8e"], [817, 17, 250, 4, "#8d9a8f"], [1068, 17, 250, 4, "#8a94a0"], [1320, 16, 200, 4, "#8b7f8e"],
  [-86, 20, 196, 16, "#8593a0"], [114, 22, 188, 16, "#8a9a98"], [365, 24, 238, 14, "#8596a0"], [616, 24, 100, 22, "#8a98a8"], [767, 30, 50, 8, "#72888c"], [817, 22, 188, 16, "#8a9a98"], [1068, 24, 250, 14, "#8596a0"], [1320, 24, 200, 14, "#8593a0"],
  [14, 47, 100, 4, "#e08a30"], [114, 46, 188, 3, "#e08a30"], [114, 50, 188, 6, "#f5e040"], [315, 44, 300, 4, "#c9a03c"], [315, 48, 300, 2, "#78a090"], [616, 44, 100, 4, "#d8913a"], [716, 49, 100, 6, "#f5e040"], [817, 46, 188, 3, "#e08a30"], [817, 50, 188, 6, "#f5e040"], [1018, 44, 290, 4, "#d8913a"], [1320, 44, 200, 4, "#d8913a"],
  [202, 53, 12, 3, "#f5e040"], [253, 53, 12, 3, "#f5e040"], [404, 55, 24, 5, "#e6c23c"], [503, 55, 25, 5, "#e6c23c"], [554, 53, 15, 3, "#f5e040"], [905, 53, 15, 3, "#f5e040"], [1018, 56, 50, 5, "#e6c23c"], [1207, 55, 25, 5, "#e6c23c"], [1306, 53, 15, 3, "#f5e040"],
  [114, 63, 25, 3, "#8a98a0"], [165, 63, 25, 3, "#8a98a0"], [215, 63, 25, 3, "#8a98a0"], [265, 63, 25, 3, "#8a98a0"], [365, 63, 25, 3, "#8a98a0"], [416, 63, 25, 3, "#8a98a0"], [465, 63, 25, 3, "#8a98a0"], [616, 60, 18, 5, "#9a8aa4"], [667, 63, 25, 3, "#8a98a0"], [1118, 60, 20, 5, "#9a8aa4"], [1170, 63, 25, 3, "#8a98a0"], [1320, 63, 25, 3, "#8a98a0"], [1370, 63, 25, 3, "#8a98a0"],
  [225, 72, 90, 3, "#6e8a70"], [350, 72, 260, 3, "#8a9a78"], [114, 76, 500, 3, "#c878a0"], [114, 80, 500, 3, "#b0a8b0"], [930, 72, 100, 3, "#6e8a70"], [1040, 76, 60, 3, "#c878a0"], [1100, 70, 120, 3, "#8a9a78"], [1225, 72, 80, 3, "#8a9a78"],
  [64, 87, 50, 2, "#8a9a78"], [114, 86, 190, 16, "#8e9a78"], [475, 87, 40, 3, "#8a98a0"], [515, 88, 90, 4, "#9aa4ac"], [655, 88, 60, 6, "#8a8e6c"], [716, 84, 100, 6, "#7e8e70"], [817, 84, 200, 18, "#8e9a88"], [1018, 90, 200, 4, "#8a94a8"], [1220, 90, 100, 6, "#8a8e6c"], [1480, 87, 38, 2, "#8a9a78"],
  [-85, 96, 36, 4, "#8e7f98"], [-85, 104, 36, 3, "#8e7080"], [14, 94, 36, 6, "#8e7f98"], [14, 105, 36, 3, "#8e7080"], [78, 103, 32, 4, "#78869a"], [215, 105, 50, 6, "#9a8a78"], [416, 94, 36, 6, "#8e7f98"], [416, 105, 36, 3, "#a07888"], [466, 98, 40, 6, "#8e7f98"], [516, 105, 80, 6, "#b09088"], [616, 94, 36, 6, "#8e7f98"], [667, 94, 36, 6, "#8e7f98"], [767, 94, 36, 6, "#8e7f98"], [817, 105, 170, 6, "#9a8a78"], [1018, 94, 60, 12, "#9a88b0"], [1068, 94, 36, 6, "#8e7f98"], [1118, 94, 36, 6, "#8e7f98"], [1170, 94, 36, 6, "#8e7f98"], [1220, 105, 36, 3, "#a07888"], [1320, 94, 36, 6, "#8e7f98"], [1320, 105, 36, 3, "#a07888"], [1420, 105, 36, 3, "#a07888"], [1485, 103, 32, 4, "#78869a"],
  [0, 114, 88, 4, "#8a9098"], [88, 116, 100, 3, "#90a0a8"], [667, 115, 330, 3, "#8a88a8"], [1043, 114, 100, 3, "#8a88a8"], [1295, 114, 200, 3, "#8a88a8"],
  [-86, 120, 1643, 4, "#76848a"],
];

function Overview() {
  return (
    <svg width="1991" height="38" viewBox="-86 12 1643 114" preserveAspectRatio="none" className="shrink-0 border border-[#66757c] bg-[#4f6068]">
      {OVERVIEW.map((r, i) => (
        <rect key={i} x={r[0]} y={r[1]} width={r[2]} height={r[3]} fill={r[4]} />
      ))}
    </svg>
  );
}

const rulerMarks = Array.from({ length: 33 }, (_, i) => i * 4 + 1);

function Chevron({ dir }: { dir: "left" | "right" | "up" }) {
  const d = dir === "left" ? "M9 1L3 9L9 17" : dir === "right" ? "M3 1L9 9L3 17" : "M1 9L9 3L17 9";
  return (
    <svg width={dir === "up" ? 18 : 12} height={dir === "up" ? 12 : 18} viewBox={dir === "up" ? "0 0 18 12" : "0 0 12 18"}>
      <path d={d} fill="none" stroke="#b6bec4" strokeWidth="1.800" />
    </svg>
  );
}

const BTN = "flex shrink-0 items-center justify-center border border-[#5e676e] bg-[#48515a]";

function App() {
  return (
    <div className="flex h-[1642px] w-[2880px] flex-col overflow-hidden bg-[#3e4750] font-['Roboto','Liberation_Sans',sans-serif]">
      <div className="h-[8px] shrink-0 border-b-2 border-[#2e353c] bg-[#5c656d]" />
      <div className="flex min-h-0 flex-1">
        <div className="flex w-[16px] shrink-0 flex-col items-center justify-center gap-[4px] border-r-2 border-[#2f363d] pb-[20px]">
          <div className="h-[3px] w-[3px] bg-[#6a747b]" />
          <div className="h-[3px] w-[3px] bg-[#6a747b]" />
          <div className="h-[3px] w-[3px] bg-[#6a747b]" />
        </div>
        <div className="flex min-w-0 flex-1 flex-col">
          <Toolbar />
          <div className="flex min-h-0 flex-1">
            <Picker />
            <div className="flex min-w-0 flex-1 flex-col">
              <div className="flex h-[82px] shrink-0">
                <div className="flex w-[222px] shrink-0 pt-[3px]">
                  <div className="flex w-[59px] items-end justify-center rounded-tl-[8px] bg-[#4a535b] pb-[8px] pl-[14px] text-[34px] font-bold leading-none text-[#e6eaec] [clip-path:polygon(24px_0,100%_0,100%_100%,0_100%,0_92%)]">
                    +
                  </div>
                  <div className="ml-[1px] flex flex-1 flex-col border-l border-[#2e353c] bg-[#4a535b] pt-[4px]">
                    <div className="flex h-[38px] items-center pl-[11px]">
                      <WaveGlyph cls="text-[#7f8990]" />
                      <AutoGlyph cls="ml-[17px] text-[#c3cad0]" />
                      <svg width="31" height="22" viewBox="0 0 31 22" className="ml-[18px] text-[#7f8990]">{PIANO}</svg>
                    </div>
                    <div className="mt-[6px] flex items-center pl-[20px] text-[16px] leading-none tracking-[0.2px] text-[#b9c1c7]">
                      <span className="w-[34px] shrink-0"><Narrow cls="scale-x-[0.72]">STEP</Narrow></span>
                      <div className="h-[22px] w-[21px] shrink-0 rounded-[8px] border-2 border-[#98a1a8]" />
                      <span className="ml-[12px] w-[40px] shrink-0"><Narrow cls="scale-x-[0.72]">SLIDE</Narrow></span>
                      <div className="flex h-[21px] w-[21px] shrink-0 items-center justify-center rounded-full border-2 border-[#6b757c]">
                        <div className="h-[9px] w-[9px] rounded-full bg-[#cfd6db]" />
                      </div>
                    </div>
                  </div>
                </div>
                <div className="flex min-w-0 flex-1 flex-col">
                  <div className="flex h-[44px] shrink-0 items-start bg-[#2f383f] pt-[2px]">
                    <div className={`${BTN} h-[38px] w-[39px]`}><Chevron dir="left" /></div>
                    <div className="ml-[2px]"><Overview /></div>
                    <div className={`${BTN} ml-[201px] h-[38px] w-[38px]`}><Chevron dir="right" /></div>
                    <div className={`${BTN} ml-[2px] h-[38px] w-[38px]`}><div className="h-[5px] w-[4px] bg-[#1e252b]" /></div>
                  </div>
                  <div className="flex min-h-0 flex-1">
                    <div className="relative flex w-[2271px] shrink-0 items-center border-b-2 border-[#263640] bg-[#1f2d36] text-[23px] leading-none tracking-[0.8px] text-[#8c9ba6]">
                      {rulerMarks.map((m) => (
                        <span key={m} className="w-[69.48px] shrink-0"><Narrow cls="scale-x-[0.78]">{m}</Narrow></span>
                      ))}
                      <div className="absolute left-0 top-0 h-[18px] w-[16px] bg-gradient-to-br from-[#d8f2a0] to-[#8fbf4a] [clip-path:polygon(0_0,100%_0,40%_100%,0_100%)]" />
                    </div>
                    <div className={`${BTN} ml-[2px] h-[36px] w-[38px]`}><Chevron dir="up" /></div>
                  </div>
                </div>
              </div>
              <div className="flex min-h-0 flex-1">
                <div className="flex w-[2493px] shrink-0 flex-col overflow-hidden border-b-2 border-[#1a242b]">
                  {tracks.map((t, i) => (
                    <div key={t.name} className="flex shrink-0">
                      <TrackHeader t={t} />
                      <div className="w-[3px] shrink-0 bg-[#2b3a44]" />
                      <Lane t={t} index={i} />
                    </div>
                  ))}
                </div>
                <div className={`ml-[2px] flex w-[38px] shrink-0 flex-col justify-between ${HATCH}`}>
                  <div className={`${BTN} h-[66px] w-[38px]`} />
                  <div className={`${BTN} h-[32px] w-[38px] rotate-180`}><Chevron dir="up" /></div>
                </div>
              </div>
            </div>
          </div>
        </div>
      </div>
      <div className="h-[14px] shrink-0" />
    </div>
  );
}

export default App;
